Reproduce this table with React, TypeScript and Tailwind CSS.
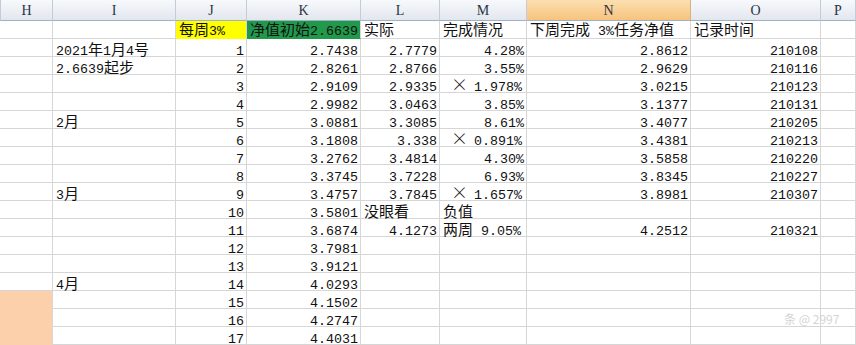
import React from "react";

type Cell = { t?: string; a?: "l" | "r" | "x"; bg?: "y" | "g" | "o" };

const CJK = /[\u3000-\u9fff\uff00-\uffef]/;

function Txt({ s }: { s: string }) {
  const parts: { k: "c" | "a" | "x"; v: string }[] = [];
  for (const ch of s) {
    const k = ch === "×" ? "x" : CJK.test(ch) ? "c" : "a";
    const last = parts[parts.length - 1];
    if (last && last.k === k && k !== "x") last.v += ch;
    else parts.push({ k, v: ch });
  }
  return (
    <span className="whitespace-pre">
      {parts.map((p, i) =>
        p.k === "c" ? (
          <span key={i} className="font-['Noto_Sans_CJK_SC',sans-serif] text-[15px] leading-[8px]">
            {p.v}
          </span>
        ) : p.k === "x" ? (
          <span
            key={i}
            className="inline-block w-[15px] text-center font-['Noto_Sans_CJK_SC',sans-serif] text-[17px] font-light leading-[8px]"
          >
            {p.v}
          </span>
        ) : (
          <span key={i}>{p.v}</span>
        )
      )}
    </span>
  );
}

const letters = ["H", "I", "J", "K", "L", "M", "N", "O", "P"];

const rows: Cell[][] = [
  [{}, {}, { t: "每周3%", a: "l", bg: "y" }, { t: "净值初始2.6639", a: "l", bg: "g" }, { t: "实际", a: "l" }, { t: "完成情况", a: "l" }, { t: "下周完成 3%任务净值", a: "l" }, { t: "记录时间", a: "l" }, {}],
  [{}, { t: "2021年1月4号", a: "l" }, { t: "1" }, { t: "2.7438" }, { t: "2.7779" }, { t: "4.28%" }, { t: "2.8612" }, { t: "210108" }, {}],
  [{}, { t: "2.6639起步", a: "l" }, { t: "2" }, { t: "2.8261" }, { t: "2.8766" }, { t: "3.55%" }, { t: "2.9629" }, { t: "210116" }, {}],
  [{}, {}, { t: "3" }, { t: "2.9109" }, { t: "2.9335" }, { t: "× 1.978%", a: "x" }, { t: "3.0215" }, { t: "210123" }, {}],
  [{}, {}, { t: "4" }, { t: "2.9982" }, { t: "3.0463" }, { t: "3.85%" }, { t: "3.1377" }, { t: "210131" }, {}],
  [{}, { t: "2月", a: "l" }, { t: "5" }, { t: "3.0881" }, { t: "3.3085" }, { t: "8.61%" }, { t: "3.4077" }, { t: "210205" }, {}],
  [{}, {}, { t: "6" }, { t: "3.1808" }, { t: "3.338" }, { t: "× 0.891%", a: "x" }, { t: "3.4381" }, { t: "210213" }, {}],
  [{}, {}, { t: "7" }, { t: "3.2762" }, { t: "3.4814" }, { t: "4.30%" }, { t: "3.5858" }, { t: "210220" }, {}],
  [{}, {}, { t: "8" }, { t: "3.3745" }, { t: "3.7228" }, { t: "6.93%" }, { t: "3.8345" }, { t: "210227" }, {}],
  [{}, { t: "3月", a: "l" }, { t: "9" }, { t: "3.4757" }, { t: "3.7845" }, { t: "× 1.657%", a: "x" }, { t: "3.8981" }, { t: "210307" }, {}],
  [{}, {}, { t: "10" }, { t: "3.5801" }, { t: "没眼看", a: "l" }, { t: "负值", a: "l" }, {}, {}, {}],
  [{}, {}, { t: "11" }, { t: "3.6874" }, { t: "4.1273" }, { t: "两周 9.05%", a: "l" }, { t: "4.2512" }, { t: "210321" }, {}],
  [{}, {}, { t: "12" }, { t: "3.7981" }, {}, {}, {}, {}, {}],
  [{}, {}, { t: "13" }, { t: "3.9121" }, {}, {}, {}, {}, {}],
  [{}, { t: "4月", a: "l" }, { t: "14" }, { t: "4.0293" }, {}, {}, {}, {}, {}],
  [{ bg: "o" }, {}, { t: "15" }, { t: "4.1502" }, {}, {}, {}, {}, {}],
  [{ bg: "o" }, {}, { t: "16" }, { t: "4.2747" }, {}, {}, {}, {}, {}],
  [{ bg: "o" }, {}, { t: "17" }, { t: "4.4031" }, {}, {}, {}, {}, {}],
];

function DataCell({ c, first }: { c: Cell; first: boolean }) {
  const align =
    c.a === "l" ? "justify-start pl-[3px]" : c.a === "x" ? "justify-end pr-[4px]" : "justify-end pr-[2px]";
  const bg =
    c.bg === "y"
      ? "bg-[#ffff00] border-b-[#ffff00]"
      : c.bg === "g"
      ? "bg-[#20994b] border-b-[#20994b]"
      : c.bg === "o"
      ? "bg-[#fbd0ab] border-b-[#fbd0ab]"
      : "bg-white border-b-[#d6d6d6]";
  const pad = first ? "pt-[3px]" : "pt-[5px]";
  return (
    <div
      className={`flex h-[18px] items-start whitespace-nowrap border-b border-r border-r-[#d6d6d6] leading-[15px] ${align} ${bg} ${pad}`}
    >
      {c.t ? <Txt s={c.t} /> : null}
    </div>
  );
}

export default function App() {
  return (
    <div className="relative h-[345px] w-[856px] overflow-hidden bg-white font-['Liberation_Mono','Noto_Sans_CJK_SC',monospace] text-[13.33px] text-[#111]">
      <div className="grid grid-cols-[53px_123px_71px_114px_79px_87px_164px_130px_1fr]">
        {letters.map((l) => (
          <div
            key={l}
            className={`flex h-[21px] items-center justify-center border-b border-r border-b-[#9fb1c6] font-['Liberation_Serif',serif] text-[14px] text-[#2a3444] ${
              l === "N"
                ? "border-r-[#d9b27c] bg-gradient-to-b from-[#fbdfb0] to-[#f7c37d]"
                : "border-r-[#c3ccd8] bg-gradient-to-b from-[#f7f9fc] to-[#e2e7ee]"
            } ${l === "H" ? "border-l border-l-[#c3ccd8]" : ""}`}
          >
            {l}
          </div>
        ))}
        {rows.map((r, ri) =>
          r.map((c, ci) => <DataCell key={`${ri}-${ci}`} c={c} first={ri === 0} />)
        )}
      </div>
      <div className="pointer-events-none absolute left-[784px] top-[310px] font-['Noto_Sans_CJK_SC',sans-serif] text-[12px] text-[#d4d4d4]">
        条 @ 2997
      </div>
    </div>
  );
}
